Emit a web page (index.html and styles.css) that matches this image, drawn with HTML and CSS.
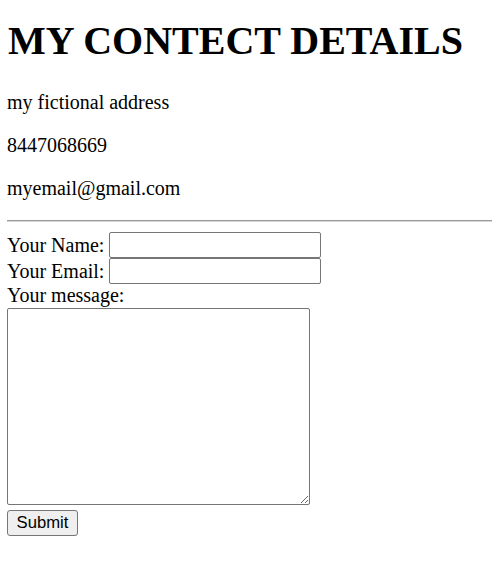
FILE: index.html
```html
<!DOCTYPE html>
<html>
<head>
<meta charset="utf-8">
<link rel="stylesheet" href="styles.css">
</head>
<body>
<h1 class="title">MY CONTECT DETAILS</h1>
<p class="info">my fictional address</p>
<p class="info">8447068669</p>
<p class="info">myemail@gmail.com</p>
<hr class="rule">
<form class="form">
  <div class="row"><label>Your Name:</label> <input class="field" type="text"></div>
  <div class="row"><label>Your Email:</label> <input class="field" type="text"></div>
  <div class="label-line">Your message:</div>
  <textarea class="message"></textarea>
  <button class="submit" type="button">Submit</button>
</form>
</body>
</html>
```
FILE: styles.css
```css
html, body {
  background: #fff;
}
body {
  margin: 8px 0 8px 7px;
  font-family: "Liberation Serif", "Times New Roman", serif;
  font-size: 20px;
  line-height: 23px;
  color: #000;
}
.title {
  font-size: 40px;
  line-height: 46px;
  font-weight: bold;
  margin: 10px 0 27px 1px;
}
.info {
  margin: 20px 0;
}
.rule {
  margin: 20px 0 10px 0;
  border: none;
  border-top: 1px solid #9a9a9a;
  border-bottom: 1px solid #d6d6d6;
  height: 0;
}
.form {
  margin: 0;
}
.row {
  height: 26px;
  line-height: 26px;
  display: flex;
  align-items: center;
  gap: 5px;
}
.field {
  box-sizing: border-box;
  width: 212px;
  height: 26px;
  margin: 0;
  padding: 1px 3px;
  border: 1px solid #767676;
  border-radius: 2px;
  font-family: "Liberation Sans", Arial, sans-serif;
  font-size: 16.67px;
  background: #fff;
}
.message {
  display: block;
  box-sizing: border-box;
  width: 303px;
  height: 197px;
  margin: 1px 0 5px 0;
  padding: 2px;
  border: 1px solid #767676;
  border-radius: 2px;
  resize: both;
  font-family: "Liberation Mono", monospace;
  font-size: 16.67px;
}
.submit {
  display: block;
  box-sizing: border-box;
  width: 71px;
  height: 26px;
  margin: 0;
  padding: 1px 7px;
  border: 1px solid #767676;
  border-radius: 3px;
  background: #efefef;
  font-family: "Liberation Sans", Arial, sans-serif;
  font-size: 16.67px;
  color: #000;
}
```
